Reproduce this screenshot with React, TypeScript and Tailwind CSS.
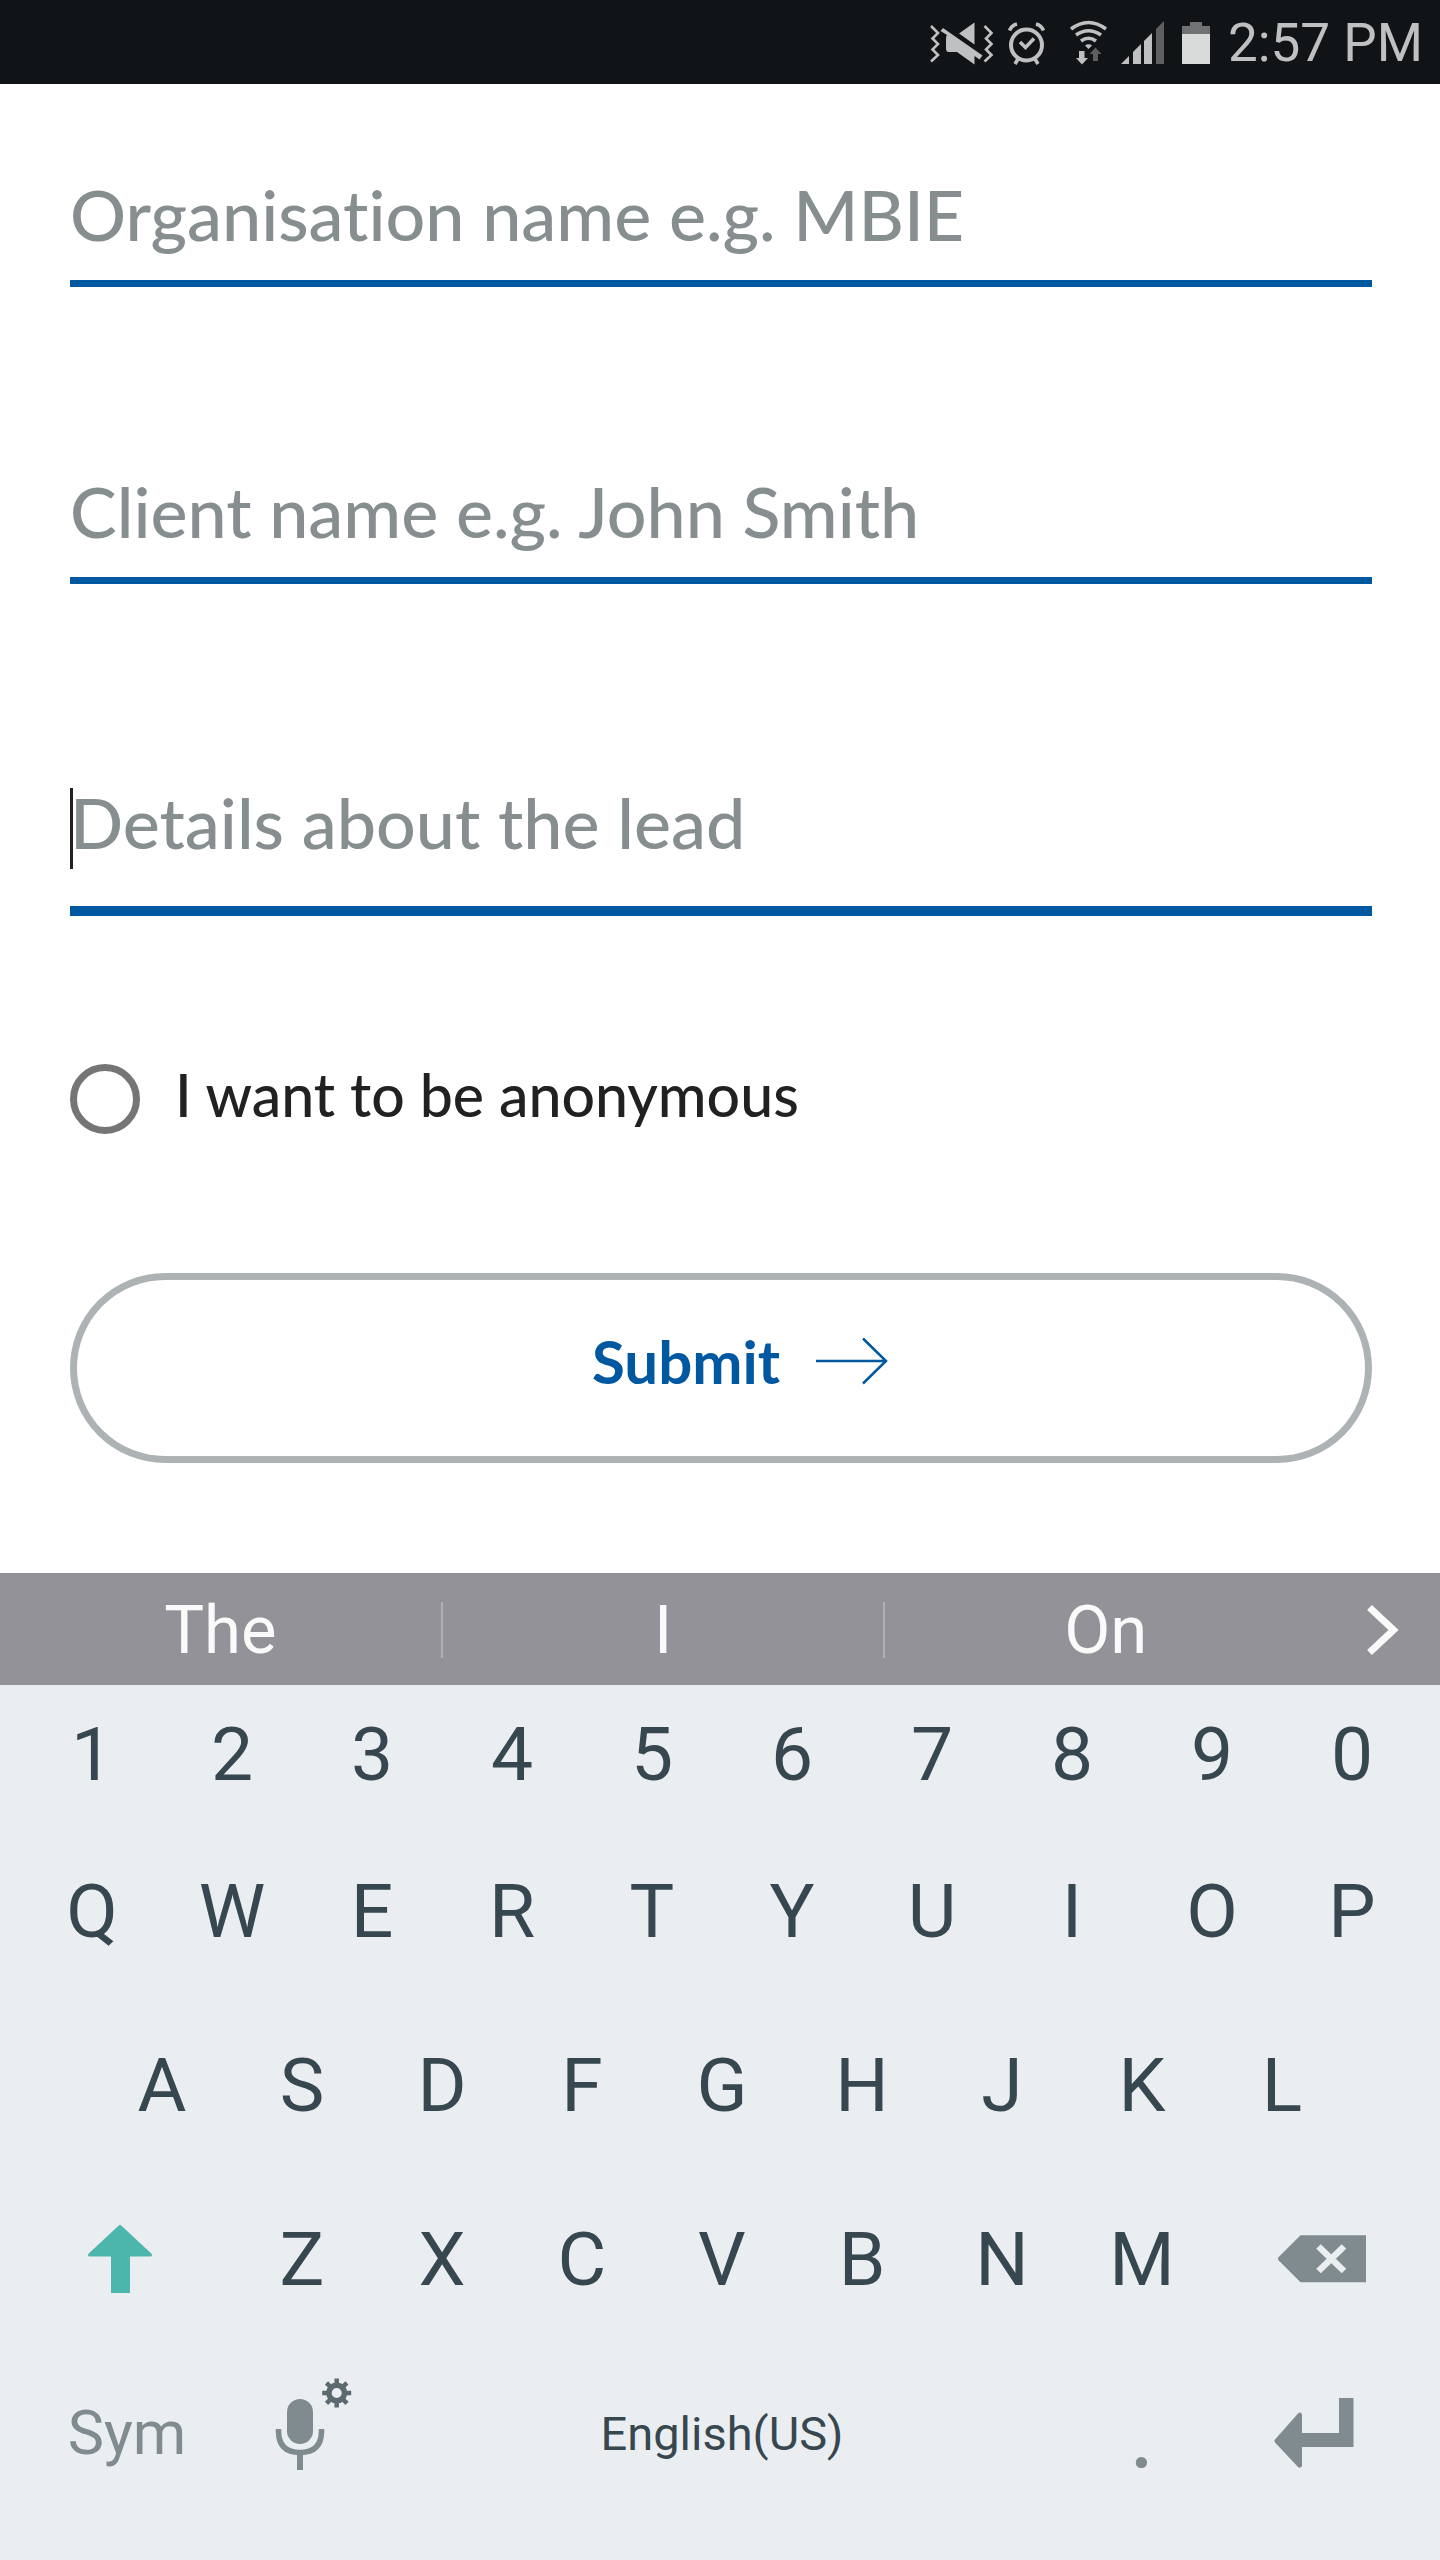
import type { ReactNode } from 'react';

function StatusBar() {
  return (
    <header className="flex h-[84px] items-center justify-end bg-[#101417] pt-[2px] pr-[17px] text-[#bfc0c2]">
      <svg className="mr-[13px] h-[46px] w-[66px]" viewBox="928 20 66 46" fill="none" aria-label="Vibrate">
        <g stroke="currentColor" strokeWidth="2.6">
          <path d="M931 26l7 7-5.500 5.500 5.500 5.500-5.500 5.500 5.500 5.500-7 6.500" />
          <path d="M984.500 26l7 7-5.500 5.500 5.500 5.500-5.500 5.500 5.500 5.500-7 6.500" />
        </g>
        <path d="M974.500 22.500v22L959 33.500zM943 28l39.500 27.500-3 4-5-3.500V64.500L957 52h-8.500q-2.500 0-2.500-4V39q0-3 1-4l-6.500-4z" fill="currentColor" />
      </svg>
      <svg className="mr-[22px] h-[46px] w-[40px]" viewBox="1006 20 40 46" fill="none" stroke="currentColor" aria-label="Alarm">
        <circle cx="1025.500" cy="45" r="15.500" strokeWidth="4" />
        <path d="M1019 42l5.500 5.500 8.500-9" strokeWidth="3.500" />
        <path d="M1008.500 30.500q2-5 7.500-6.500M1042.500 30.500q-2-5-7.500-6.500M1017 59l-3 5M1034 59l3 5" strokeWidth="3.600" />
      </svg>
      <svg className="mr-[12px] h-[46px] w-[40px]" viewBox="1068 20 40 46" fill="none" aria-label="Wi-Fi">
        <g stroke="currentColor" strokeWidth="3.600">
          <path d="M1070 29q17.500-13 35 0" />
          <path d="M1075 35q12.500-8.500 25 0" />
          <path d="M1080 41q7.500-5.500 15 0" />
        </g>
        <path d="M1087.500 49l-3.500-3.500q3.500-2.500 7 0zM1078 51h5.500v7h3.500l-6 6.500-6-6.500h3z" fill="currentColor" />
        <path d="M1092 61h5v-7h3.500l-6-6.500-6 6.500h3.500z" fill="#5d5f61" />
      </svg>
      <svg className="mr-[16px] h-[46px] w-[44px]" viewBox="1120 20 44 46" aria-label="Signal">
        <path d="M1120 64l8-8v8zM1132 64V52l8-8v20zM1143 64V41l8-8v31z" fill="currentColor" />
        <path d="M1155 64V29l8-8v43z" fill="#5d5f61" />
      </svg>
      <svg className="mr-[17px] h-[46px] w-[30px]" viewBox="1180 20 30 46" aria-label="Battery">
        <path d="M1181 34v-8h8v-4h12v4h8v8z" fill="#707274" />
        <path d="M1181 34h28v30h-28z" fill="#d9dbda" />
      </svg>
      <time className="text-[53px] leading-none">2:57 PM</time>
    </header>
  );
}

function Field({ label }: { label: string }) {
  return (
    <input
      type="text"
      aria-label={label}
      placeholder={label}
      className="block h-[131px] w-full border-b-[7px] border-[#0058a1] bg-transparent pb-[8px] text-[70px] font-medium text-[#212121] outline-none placeholder:text-[#868e90] placeholder:opacity-100"
    />
  );
}

function LeadForm() {
  return (
    <form
      className="pt-[72px] pr-[68px] pb-[110px] pl-[70px] font-['Lato','Noto_Sans',sans-serif] [font-variant-ligatures:none]"
      onSubmit={(e) => e.preventDefault()}
    >
      <Field label="Organisation name e.g. MBIE" />
      <div className="mt-[166px]">
        <Field label="Client name e.g. John Smith" />
      </div>
      <div className="relative mt-[162px]">
        <input
          type="text"
          aria-label="Details about the lead"
          placeholder="Details about the lead"
          className="block h-[170px] w-full border-b-[10px] border-[#0058a1] bg-transparent pb-[8px] text-[70px] font-medium text-[#212121] outline-none placeholder:text-[#868e90] placeholder:opacity-100"
        />
        <span className="absolute top-[42px] left-0 h-[81px] w-[3px] bg-[#212121]" />
      </div>
      <label className="mt-[147px] flex h-[71px] items-center gap-[35px] text-[59px] leading-none font-medium text-[#212121]">
        <input type="radio" className="size-[70px] shrink-0 appearance-none rounded-full border-[7px] border-[#757575] checked:bg-[#0058a1]" />
        <span className="pb-[8px]">I want to be anonymous</span>
      </label>
      <button type="submit" className="mt-[139px] flex h-[190px] w-full items-center justify-center gap-[36px] rounded-full border-[7px] border-[#adb3b5] pb-[14px] pl-[38px] text-[60px] font-bold text-[#0058a1]">
        Submit
        <svg className="h-[48px] w-[72px]" viewBox="0 0 72 48" fill="none" stroke="currentColor" strokeWidth="2.500">
          <path d="M0 24h70M47 1.500l23 22.500-23 22.500" />
        </svg>
      </button>
    </form>
  );
}

function Suggestions() {
  return (
    <div className="flex h-[112px] items-center bg-[#949299] pt-[2px] text-[67px] text-[#fafafa]">
      <button type="button" className="flex-1">The</button>
      <span className="h-14 w-[2px] bg-[#b0afb3]" />
      <button type="button" className="flex-1">I</button>
      <span className="h-14 w-[2px] bg-[#b0afb3]" />
      <button type="button" className="flex-1">On</button>
      <button type="button" aria-label="More suggestions" className="flex w-[114px] justify-center">
        <svg className="h-[52px] w-[36px]" viewBox="0 0 36 52" fill="none" stroke="currentColor" strokeWidth="7">
          <path d="M4.500 3.500L28.500 26 4.500 48.500" />
        </svg>
      </button>
    </div>
  );
}

function Keys({ keys }: { keys: string }) {
  return (
    <>
      {keys.split('').map((k) => (
        <button key={k} type="button" className="flex flex-[2] items-center justify-center">{k}</button>
      ))}
    </>
  );
}

function Row({ children }: { children: ReactNode }) {
  return <div className="flex h-[174px] items-stretch">{children}</div>;
}

function Keyboard() {
  return (
    <section className="bg-[#ebeef1] pr-[18px] pb-[40px] pl-[22px] text-[75px] leading-none text-[#37474f]">
      <div className="flex h-[139px] items-stretch">
        <Keys keys="1234567890" />
      </div>
      <Row><Keys keys="QWERTYUIOP" /></Row>
      <Row>
        <span className="flex-[1]" />
        <Keys keys="ASDFGHJKL" />
        <span className="flex-[1]" />
      </Row>
      <Row>
        <button type="button" aria-label="Shift" className="flex flex-[3] items-center justify-center">
          <svg className="mr-[14px] h-[70px] w-[66px]" viewBox="87 2225 66 70" fill="#4db6ac">
            <path d="M118.500 2226.800q1.500-1.400 3 0l30 28q1.500 2.700-1.500 2.700h-20V2294h-19v-36.500H90q-3 0-1.500-2.700z" />
          </svg>
        </button>
        <Keys keys="ZXCVBNM" />
        <button type="button" aria-label="Backspace" className="flex flex-[3] items-center justify-center">
          <svg className="ml-[10px] h-[48px] w-[90px]" viewBox="1277 2237 90 48">
            <path d="M1300.500 2237.200h65.500v47h-65.500l-22-22q-1.200-1.500 0-3z" fill="#808b8f" />
            <path d="M1318.500 2248.500l25.500 24.500M1344 2248.500l-25.500 24.500" stroke="#ebeef1" strokeWidth="6.500" />
          </svg>
        </button>
      </Row>
      <div className="flex h-[174px] items-stretch text-[#808b8f]">
        <button type="button" className="flex-[3] text-[61px]">Sym</button>
        <button type="button" aria-label="Voice input and settings" className="flex flex-[2] items-center justify-center">
          <svg className="h-[110px] w-[106px]" viewBox="249 2378 106 110">
            <rect x="287" y="2399" width="26" height="45" rx="13" fill="currentColor" />
            <path d="M278.500 2429v2q0 21.500 21.500 21.500t21.500-21.500v-2" fill="none" stroke="currentColor" strokeWidth="5.500" />
            <path d="M297 2452h6v18h-6z" fill="currentColor" />
            <g stroke="#5c696f">
              <circle cx="336.700" cy="2393" r="7.800" fill="none" strokeWidth="5.500" />
              <path d="M336.700 2378.500v6M336.700 2401.500v6M322.200 2393h6M345.200 2393h6M326.500 2382.800l4 4M343 2399.300l4 4M346.900 2382.800l-4 4M330.500 2399.300l-4 4" strokeWidth="4.500" />
            </g>
          </svg>
        </button>
        <button type="button" className="flex-[10] text-[47px] text-[#37474f]">English(US)</button>
        <button type="button" className="flex-[2] text-[100px]">.</button>
        <button type="button" aria-label="Enter" className="flex flex-[3] items-center justify-center">
          <svg className="h-[72px] w-[88px]" viewBox="1273 2398 88 72" fill="currentColor">
            <path d="M1339 2399h14.500v49H1302v19q-1.500 3-4 1l-23-24.500q-1.500-1.500 0-3l23-26q3-2.500 4 1V2434h37z" />
          </svg>
        </button>
      </div>
    </section>
  );
}

export default function App() {
  return (
    <main className="min-h-screen bg-white font-['Roboto',sans-serif]">
      <StatusBar />
      <LeadForm />
      <Suggestions />
      <Keyboard />
    </main>
  );
}
